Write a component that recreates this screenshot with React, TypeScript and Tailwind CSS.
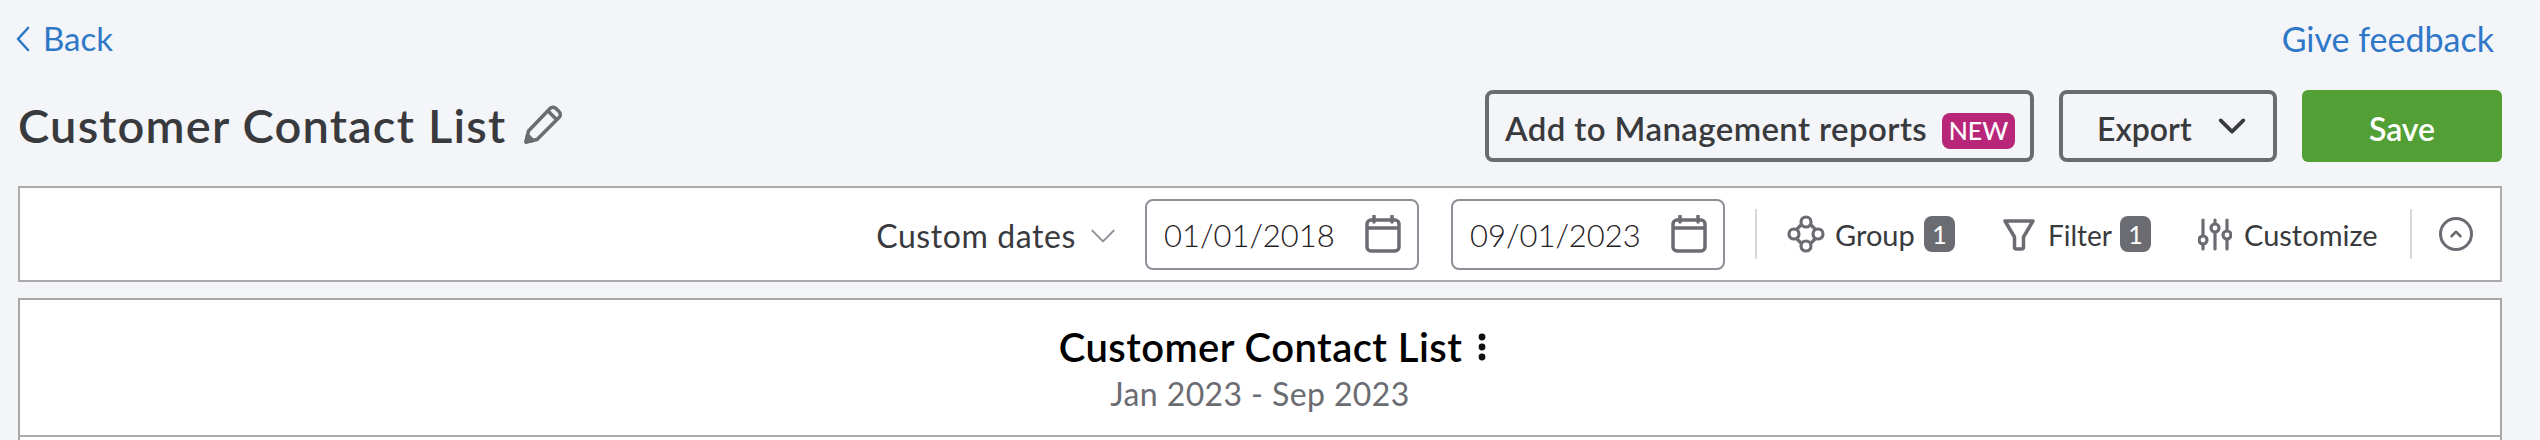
const font = "font-['Lato','Noto_Sans',sans-serif]"

function Chevron({ className, dir = "down", sw = 2 }: { className: string; dir?: "down" | "up"; sw?: number }) {
  const d = dir === "down" ? "M4 8l8 8 8-8" : "M6 15l6-6 6 6"
  return (
    <svg viewBox="0 0 24 24" fill="none" stroke="currentColor" strokeWidth={sw} strokeLinecap="round" strokeLinejoin="round" className={className}>
      <path d={d} />
    </svg>
  )
}

function CalendarIcon() {
  return (
    <svg viewBox="0 0 36 38" fill="none" stroke="#6b6c72" strokeWidth="3.500" className="w-[36px] h-[38px] shrink-0">
      <rect x="2" y="5" width="32" height="31" rx="4" />
      <path d="M2 13h32" />
      <path d="M9 1v6M27 1v6" strokeLinecap="round" />
    </svg>
  )
}

function DateInput({ value, className }: { value: string; className: string }) {
  return (
    <div className={`flex items-center justify-between h-[71px] pl-[17px] pr-[16px] bg-white border-2 border-[#8d9096] rounded-[8px] ${className}`}>
      <span className="pt-[2px] text-[31px] font-light text-[#1f2023]">{value}</span>
      <CalendarIcon />
    </div>
  )
}

function CountBadge() {
  return (
    <span className="flex items-center justify-center w-[31px] h-[36px] rounded-[8px] bg-[#6b6c72] text-white text-[25px] leading-none">1</span>
  )
}

export default function App() {
  return (
    <div className={`${font} h-[440px] overflow-hidden bg-[#f4f5f8] pl-[18px] pr-[38px] text-[#393a3d]`}>
      {/* back + feedback */}
      <div className="flex items-center justify-between h-[77px] pr-[8px]">
        <a className="flex items-center gap-[12px] -ml-[3px] text-[33px] text-[#2f78c7]">
          <svg viewBox="0 0 16 28" fill="none" stroke="currentColor" strokeWidth="2.600" strokeLinecap="round" strokeLinejoin="round" className="w-[16px] h-[28px]">
            <path d="M13 3L3 14l10 11" />
          </svg>
          Back
        </a>
        <a className="text-[34px] text-[#2f78c7]">Give feedback</a>
      </div>

      {/* title + actions */}
      <div className="flex items-center justify-between h-[72px] mt-[13px]">
        <div className="flex items-center gap-[17px]">
          <h1 className="-mt-[2px] text-[47px] font-semibold tracking-[1.2px] leading-none text-[#393a3d]">Customer Contact List</h1>
          <svg viewBox="0 0 40 40" fill="none" stroke="#6b6c72" strokeWidth="3.500" strokeLinejoin="round" className="w-[40px] h-[40px] -mt-[2px]">
            <path d="M3 37l2.500-11L27 3.500a4 4 0 0 1 6 0l3 3a4 4 0 0 1 0 6L14 34.500z" />
            <path d="M25 6l9 9" />
            <path d="M3 37l1.500-7 5.500 5.500z" fill="#6b6c72" />
          </svg>
        </div>
        <div className="flex items-center gap-[25px]">
          <button className="flex items-center justify-between w-[549px] h-[72px] pl-[16px] pr-[15px] bg-transparent border-[4px] border-[#6b6c72] rounded-[8px] text-[33px] font-semibold tracking-[0.4px] text-[#393a3d]">
            <span className="pt-[5px]">Add to Management reports</span>
            <span className="flex items-center justify-center w-[73px] h-[36px] mt-[10px] rounded-[8px] bg-[#b8267a] text-white text-[25px] font-medium tracking-normal">NEW</span>
          </button>
          <button className="flex items-center justify-between w-[218px] h-[72px] pl-[34px] pr-[24px] border-[4px] border-[#6b6c72] rounded-[8px] text-[32px] font-semibold text-[#393a3d]">
            <span className="pt-[5px]">Export</span>
            <Chevron sw={2.600} className="w-[34px] h-[34px]" />
          </button>
          <button className="w-[200px] h-[72px] pt-[5px] rounded-[6px] bg-[#52a035] text-white text-[32px] font-semibold">Save</button>
        </div>
      </div>

      {/* toolbar */}
      <div className="flex items-center justify-end h-[96px] mt-[24px] bg-white border-2 border-[#ababab] pr-[27px]">
        <span className="pt-[4px] text-[32px] tracking-[0.6px] text-[#393a3d]">Custom dates</span>
        <Chevron sw={1.500} className="w-[32px] h-[32px] mt-[4px] ml-[11px] mr-[26px] text-[#8d9096]" />
        <DateInput value="01/01/2018" className="w-[274px] mr-[32px]" />
        <DateInput value="09/01/2023" className="w-[274px] mr-[30px]" />
        <div className="w-[2px] h-[50px] bg-[#d4d7dc] mr-[30px]" />

        <div className="flex items-center mr-[48px]">
          <svg viewBox="0 0 38 38" fill="none" stroke="#6b6c72" strokeWidth="3.200" className="w-[38px] h-[38px] mr-[10px]">
            <circle cx="19" cy="7" r="5" />
            <circle cx="19" cy="31" r="5" />
            <circle cx="7" cy="19" r="5" />
            <circle cx="31" cy="19" r="5" />
            <path d="M14.500 9.500l-5 5M23.500 9.500l5 5M9.500 23.500l5 5M28.500 23.500l-5 5" />
          </svg>
          <span className="w-[80px] pt-[2px] text-[29px] mr-[9px]">Group</span>
          <CountBadge />
        </div>

        <div className="flex items-center mr-[47px]">
          <svg viewBox="0 0 32 36" fill="none" stroke="#6b6c72" strokeWidth="3.500" strokeLinejoin="round" className="w-[32px] h-[36px] mr-[13px]">
            <path d="M2 5h28L20.500 21v10a2 2 0 0 1-2 2h-5a2 2 0 0 1-2-2V21z" />
          </svg>
          <span className="w-[63px] pt-[2px] text-[28px] mr-[9px]">Filter</span>
          <CountBadge />
        </div>

        <div className="flex items-center mr-[31px]">
          <svg viewBox="0 0 34 36" fill="none" stroke="#6b6c72" strokeWidth="3.200" strokeLinecap="round" className="w-[34px] h-[36px] mr-[12px]">
            <path d="M5 4v29M17 4v29M29 4v29" />
            <circle cx="5" cy="24" r="4" fill="white" />
            <circle cx="17" cy="12" r="4" fill="white" />
            <circle cx="29" cy="19" r="4" fill="white" />
          </svg>
          <span className="w-[135px] pt-[2px] text-[29px]">Customize</span>
        </div>

        <div className="w-[2px] h-[50px] bg-[#d4d7dc] mr-[27px]" />
        <div className="flex items-center justify-center w-[34px] h-[34px] rounded-full border-[3px] border-[#6b6c72] text-[#6b6c72]">
          <Chevron dir="up" sw={3.400} className="w-[18px] h-[18px]" />
        </div>
      </div>

      {/* report */}
      <div className="h-[200px] mt-[16px] bg-white border-2 border-b-0 border-[#a6a6a6]">
        <div className="flex flex-col items-center h-[137px] border-b-2 border-[#ababab] pt-[24px]">
          <div className="flex items-center gap-[16px] pl-[25px]">
            <h2 className="text-[40px] leading-[46px] font-semibold tracking-[0.45px] text-black">Customer Contact List</h2>
            <svg viewBox="0 0 8 28" className="w-[8px] h-[28px] fill-[#111]">
              <circle cx="4" cy="4" r="3.400" />
              <circle cx="4" cy="14" r="3.400" />
              <circle cx="4" cy="24" r="3.400" />
            </svg>
          </div>
          <p className="mt-[4px] text-[32px] leading-[40px] tracking-[0.4px] text-[#6b6c72]">Jan 2023 - Sep 2023</p>
        </div>
      </div>
    </div>
  )
}
